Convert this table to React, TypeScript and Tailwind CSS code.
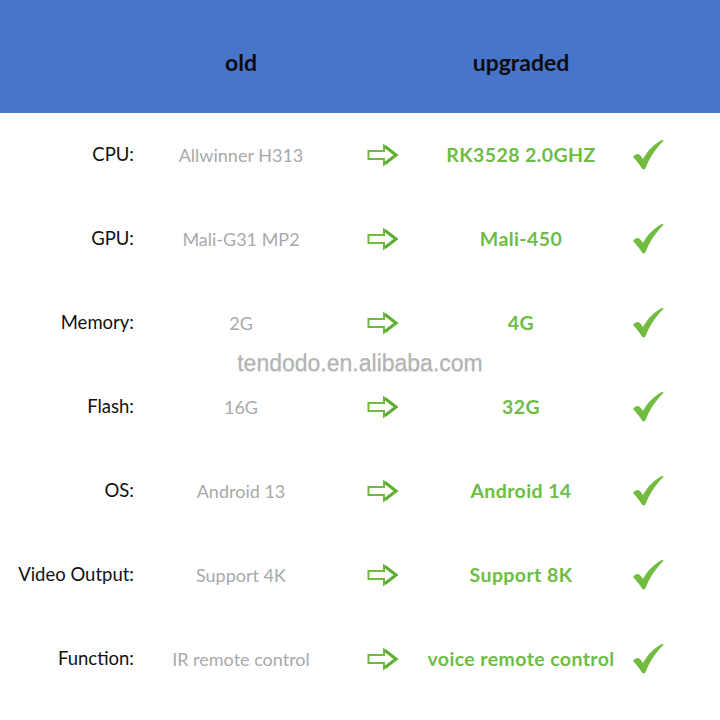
import React from 'react';

const rows = [
  { label: 'CPU:', old: 'Allwinner H313', next: 'RK3528 2.0GHZ' },
  { label: 'GPU:', old: 'Mali-G31 MP2', next: 'Mali-450' },
  { label: 'Memory:', old: '2G', next: '4G' },
  { label: 'Flash:', old: '16G', next: '32G' },
  { label: 'OS:', old: 'Android 13', next: 'Android 14' },
  { label: 'Video Output:', old: 'Support 4K', next: 'Support 8K' },
  { label: 'Function:', old: 'IR remote control', next: 'voice remote control' },
];

function Arrow() {
  return (
    <svg width="32" height="24" viewBox="0 0 32 24">
      <path
        d="M1.5 8 H17 V2.5 L29.5 12 L17 21.5 V16 H1.5 Z"
        fill="#fff"
        stroke="#6cbd3e"
        strokeWidth="2"
        strokeLinejoin="miter"
      />
      <path d="M18 3.5 L29 12 L18 20.5" fill="none" stroke="#5fae33" strokeWidth="3" />
    </svg>
  );
}

function Check() {
  return (
    <svg width="34" height="34" viewBox="0 0 34 34">
      <path
        d="M2 19 C4 16 7 15 9 17 L12 21 C17 12 23 6 31 2 C32 1.6 33 2.4 32 3.4 C25 10 19 19 14.5 30 C13.8 31.6 12.5 32 11.3 30.8 C8 26 5 22 2 19 Z"
        fill="#72bd3f"
      />
    </svg>
  );
}

export default function App() {
  return (
    <div className="relative w-[720px] h-[720px] bg-white overflow-hidden" style={{ fontFamily: 'Lato, "Noto Sans", sans-serif' }}>
      <div className="h-[113px] bg-[#4775ca] grid grid-cols-[144px_194px_88px_190px_64px] items-center pt-[12px]">
        <div />
        <div className="text-center text-[23px] font-bold text-[#0c0c14]">old</div>
        <div />
        <div className="text-center text-[23px] font-bold text-[#0c0c14]">upgraded</div>
        <div />
      </div>
      <div>
        {rows.map((r) => (
          <div key={r.label} className="h-[84px] grid grid-cols-[144px_194px_88px_190px_64px] items-center">
            <div className="text-right pr-[10px] text-[18.5px] text-[#111]">{r.label}</div>
            <div className="text-center text-[18px] text-[#a9a9a9]">{r.old}</div>
            <div className="flex justify-center pl-[2px]"><Arrow /></div>
            <div className="text-center text-[19.5px] tracking-[0.4px] font-bold text-[#6dbd45] whitespace-nowrap">{r.next}</div>
            <div className="flex justify-center"><Check /></div>
          </div>
        ))}
      </div>
      <div
        className="absolute left-0 right-0 top-[346px] text-center text-[23px] text-[#b3b3b3] [text-shadow:0_1px_1px_rgba(0,0,0,0.15)]"
        style={{ fontFamily: '"Liberation Sans", Arial, sans-serif' }}
      >
        tendodo.en.alibaba.com
      </div>
    </div>
  );
}
